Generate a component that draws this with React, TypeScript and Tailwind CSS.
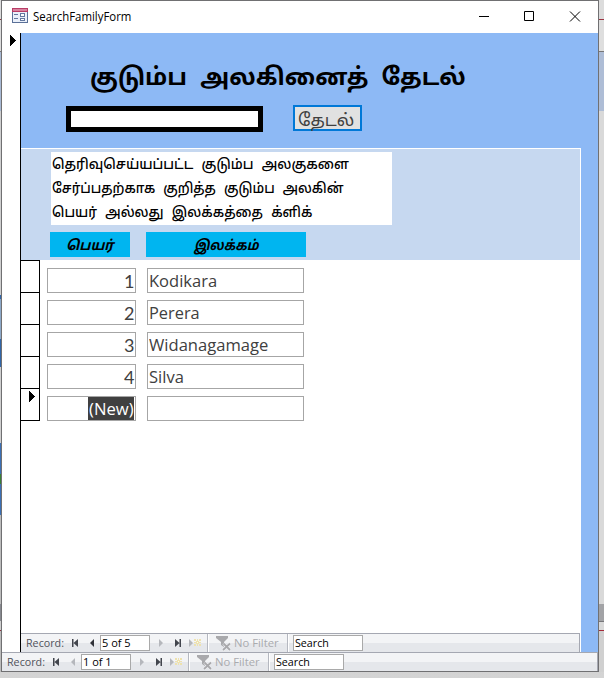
import { useLayoutEffect, useRef, useState, type ReactNode } from "react";

const TAMIL = "font-['Noto_Sans_Tamil','Noto_Sans','DejaVu_Sans',sans-serif]";

/* A single line of text condensed or widened to the given width. */
function Fit({ width, className = "", children }: { width: number; className?: string; children: ReactNode }) {
  const ref = useRef<HTMLSpanElement>(null);
  const [scale, setScale] = useState(1);
  useLayoutEffect(() => {
    if (ref.current) setScale(width / ref.current.offsetWidth);
  }, [width]);
  return (
    <span className="block shrink-0 whitespace-nowrap" style={{ width }}>
      <span ref={ref} className={`inline-block origin-left whitespace-nowrap ${className}`} style={{ transform: `scaleX(${scale})` }}>
        {children}
      </span>
    </span>
  );
}

function FormIcon() {
  return (
    <svg width="16" height="15" viewBox="0 0 16 15" shapeRendering="crispEdges">
      <rect x="0" y="0" width="16" height="15" fill="#5a7098" />
      <rect x="0" y="0" width="16" height="4" fill="#b83c66" />
      <rect x="1" y="1" width="14" height="2" fill="#d8829f" />
      <rect x="1" y="4" width="14" height="10" fill="#eaf0fa" />
      <path d="M2 6h4v1H2zM2 10h4v1H2z" fill="#6378a0" />
      <path d="M8 5h5v4H8zM8 10h5v3H8z" fill="#6378a0" />
      <path d="M9 6h3v2H9zM9 11h3v1H9z" fill="#fff" />
    </svg>
  );
}

function Pointer() {
  return (
    <svg width="6" height="11" viewBox="0 0 6 11" shapeRendering="crispEdges">
      <path d="M0 0h1v1h1v1h1v1h1v1h1v1h1v1h-1v1h-1v1h-1v1h-1v1h-1v1h-1z" />
    </svg>
  );
}

function FilterIcon() {
  return (
    <svg width="15" height="15" viewBox="0 0 15 15">
      <path d="M0 0h12v2L8 6v5L5 9V6L0 2z" fill="#a9a9ac" />
      <path d="M7.5 7.5l6.5 6.5M14 7.5L7 14" stroke="#f2f3f5" strokeWidth="3" />
      <path d="M7.5 7.5l6.5 6.5M14 7.5L7 14" stroke="#a9a9ac" strokeWidth="1.8" />
    </svg>
  );
}

function NavBar({ value, canGoBack }: { value: string; canGoBack: boolean }) {
  return (
    <div className="flex h-full items-start border-t border-[#a5a8b2] bg-[linear-gradient(#f3f4f6_0_50%,#e5e7eb_50%)] font-['Open_Sans',sans-serif] text-[11px]">
      <div className="h-[18px] w-[5px] shrink-0" />
      <Fit width={38} className="leading-[18px] text-[#50525a]">Record:</Fit>
      <svg width="36" height="18" viewBox="0 0 36 18" className="shrink-0">
        <path d="M8 5h1.500v8H8zM14 5v8L9.500 9z" fill="#42454d" />
        <path d="M30 5v8L26 9z" fill={canGoBack ? "#303238" : "#b5b7bc"} />
      </svg>
      <div className="mt-px h-4 w-[50px] shrink-0 border border-[#a9a9a9] bg-white pl-px leading-[14px] text-black">
        <Fit width={29}>{value}</Fit>
      </div>
      <svg width="57" height="18" viewBox="0 0 57 18" className="shrink-0">
        <path d="M9 5v8L13 9z" fill="#b5b7bc" />
        <path d="M25 5v8L29.500 9zM29.500 5H31v8h-1.500z" fill="#42454d" />
        <path d="M39 5v8L43 9z" fill="#b5b7bc" />
        <g shapeRendering="crispEdges">
          <path d="M44 5h2v2h-2zM47 5h1v2h-1zM49 5h2v2h-2zM44 8h2v1h-2zM49 8h2v1h-2zM44 10h2v2h-2zM47 10h1v2h-1zM49 10h2v2h-2zM46 7h3v3h-3z" fill="#eee2ae" />
          <path d="M47 8h1v1h-1z" fill="#fffbe8" />
        </g>
      </svg>
      <div className="h-[18px] w-[2px] shrink-0 border-l border-[#b5b8c0] bg-white" />
      <div className="mt-[2px] ml-[7px] w-[18px] shrink-0"><FilterIcon /></div>
      <Fit width={45} className="leading-[18px] text-[#aaabae]">No Filter</Fit>
      <div className="ml-[8px] h-[18px] w-[2px] shrink-0 border-l border-[#b5b8c0] bg-white" />
      <div className="mt-px ml-[4px] h-4 w-[70px] shrink-0 border border-[#a9a9a9] bg-white pl-px leading-[14px] text-black">
        <Fit width={34}>Search</Fit>
      </div>
    </div>
  );
}

const rows = [
  { id: "1", name: "Kodikara", width: 68 },
  { id: "2", name: "Perera", width: 51 },
  { id: "3", name: "Widanagamage", width: 119 },
  { id: "4", name: "Silva", width: 35 },
];

function Row({ id, name, width, current }: { id: string; name: string; width: number; current?: boolean }) {
  return (
    <div className="flex h-8 items-start text-[17px] text-[#404040] font-['Open_Sans',sans-serif]">
      <div className="-ml-px h-8 w-5 shrink-0 border-r border-b border-l border-black pt-[2px] pl-2">
        {current && <Pointer />}
      </div>
      <div className="mt-[7px] ml-[7px] flex h-[25px] w-[89px] justify-end border border-[#a6a6a6] pr-px leading-[23px]">
        {current ? (
          <div className="flex h-[23px] w-[46px] justify-center bg-[#404040] leading-[23px] text-white">
            <Fit width={45}>(New)</Fit>
          </div>
        ) : (
          <Fit width={10} className="font-['Lato',sans-serif] text-[18px] leading-[24px]">{id}</Fit>
        )}
      </div>
      <div className="mt-[7px] ml-[11px] h-[25px] w-[157px] border border-[#a6a6a6] pl-px leading-[23px]">
        {name && <Fit width={width}>{name}</Fit>}
      </div>
    </div>
  );
}

export default function App() {
  return (
    <div className="h-[688px] w-[608px] overflow-hidden bg-white">
      <div className="flex h-[678px] w-[604px] items-start bg-[linear-gradient(#dedede,#c8c8c8_85%,#d4d4d4)]">
        <div className="h-[672px] w-px shrink-0 bg-[linear-gradient(#dcdcdc_0_19px,#8d3442_19px_20px,#dcdcdc_20px_51px,#777_51px_52px,#a8b9d4_52px_111px,#cfcfcf_111px_295px,#3166a8_295px_299px,#8ca8c8_299px_339px,#3166a8_339px_367px,#cfcfcf_367px_443px,#3b70b5_443px_474px,#398034_474px_484px,#3b70b5_484px_515px,#bcbcbc_515px_604px,#87898f_604px_621px,#cfcfcf_621px_630px,#8d3442_630px_631px,#bbb_631px)]" />
        <div className="flex h-[672px] w-[598px] shrink-0 flex-col border border-[#707072] bg-white">
          <header className="flex h-8 shrink-0 items-center font-['Open_Sans',sans-serif] text-[12px] text-black">
            <div className="ml-[10px] w-[21px] pb-[3px]"><FormIcon /></div>
            <Fit width={98} className="leading-8">SearchFamilyForm</Fit>
            <svg width="106" height="30" viewBox="0 0 106 30" className="mr-[15px] ml-auto" fill="none" stroke="#000">
              <path d="M2 14.500h10M47.500 9.500h9v9h-9z" />
              <path d="M93 9.500l10 10M103 9.500l-10 10" />
            </svg>
          </header>
          <div className="flex h-[619px] shrink-0">
            <div className="w-[18px] shrink-0 pt-[2px] pl-2"><Pointer /></div>
            <main className="flex flex-1 flex-col border-l border-black bg-[#8db9f5]">
              <section className="h-[115px] shrink-0">
                <div className={`ml-[69px] h-[72px] pt-[23px] text-[24px] font-bold text-black [word-spacing:7px] ${TAMIL}`}>
                  <Fit width={376} className="leading-[46px]">குடும்ப அலகினைத் தேடல்</Fit>
                </div>
                <div className="flex items-start">
                  <div className="mt-px ml-[45px] h-[26px] w-[197px] border-[5px] border-black bg-white" />
                  <div className={`ml-[30px] h-[26px] w-[69px] border-2 border-[#0078d7] bg-[#e1e1e1] pl-[3px] text-[17px] text-[#404040] ${TAMIL}`}>
                    <Fit width={56} className="leading-[29px]">தேடல்</Fit>
                  </div>
                </div>
              </section>
              <section className="flex h-[504px] w-[560px] shrink-0 flex-col border-t border-r border-white bg-white">
                <div className="h-[111px] shrink-0 bg-[#c6d8f0] pt-[3px]">
                  <div className={`ml-[30px] h-[73px] w-[341px] bg-white pt-[2px] pl-px text-[14px] font-medium text-black [word-spacing:5px] ${TAMIL}`}>
                    <Fit width={297} className="leading-[24px]">தெரிவுசெய்யப்பட்ட குடும்ப அலகுகளை</Fit>
                    <Fit width={292} className="leading-[24px]">சேர்ப்பதற்காக குறித்த குடும்ப அலகின்</Fit>
                    <Fit width={260} className="leading-[24px]">பெயர் அல்லது இலக்கத்தை க்ளிக்</Fit>
                  </div>
                  <div className={`mt-[7px] ml-[29px] flex gap-4 text-[14px] font-bold text-black italic ${TAMIL}`}>
                    <div className="flex h-[25px] w-20 justify-center bg-[#00b5f0]"><Fit width={48} className="leading-[29px]">பெயர்</Fit></div>
                    <div className="flex h-[25px] w-40 justify-center bg-[#00b5f0]"><Fit width={65} className="leading-[29px]">இலக்கம்</Fit></div>
                  </div>
                </div>
                <div className="h-[373px] shrink-0">
                  <div className="-ml-px h-px w-5 bg-black" />
                  {rows.map((r) => <Row key={r.id} {...r} />)}
                  <Row id="(New)" name="" width={0} current />
                </div>
                <div className="h-[19px] border-r border-[#a5a8b2]"><NavBar value="5 of 5" canGoBack /></div>
              </section>
            </main>
          </div>
          <footer className="h-[19px] shrink-0 border-r border-[#a5a8b2]"><NavBar value="1 of 1" canGoBack={false} /></footer>
        </div>
        <div className="h-[672px] w-[5px] shrink-0 bg-[linear-gradient(#dcdcdc_0_19px,#9d3442_19px_20px,#dedede_20px_51px,#777_51px_52px,#aebdd6_52px_111px,#d9d9d9_111px_604px,#a2a3a6_604px_621px,#77777b_621px_622px,#d9d9d9_622px_630px,#a52a3a_630px_631px,#d0d0d0_631px)]" />
      </div>
    </div>
  );
}
